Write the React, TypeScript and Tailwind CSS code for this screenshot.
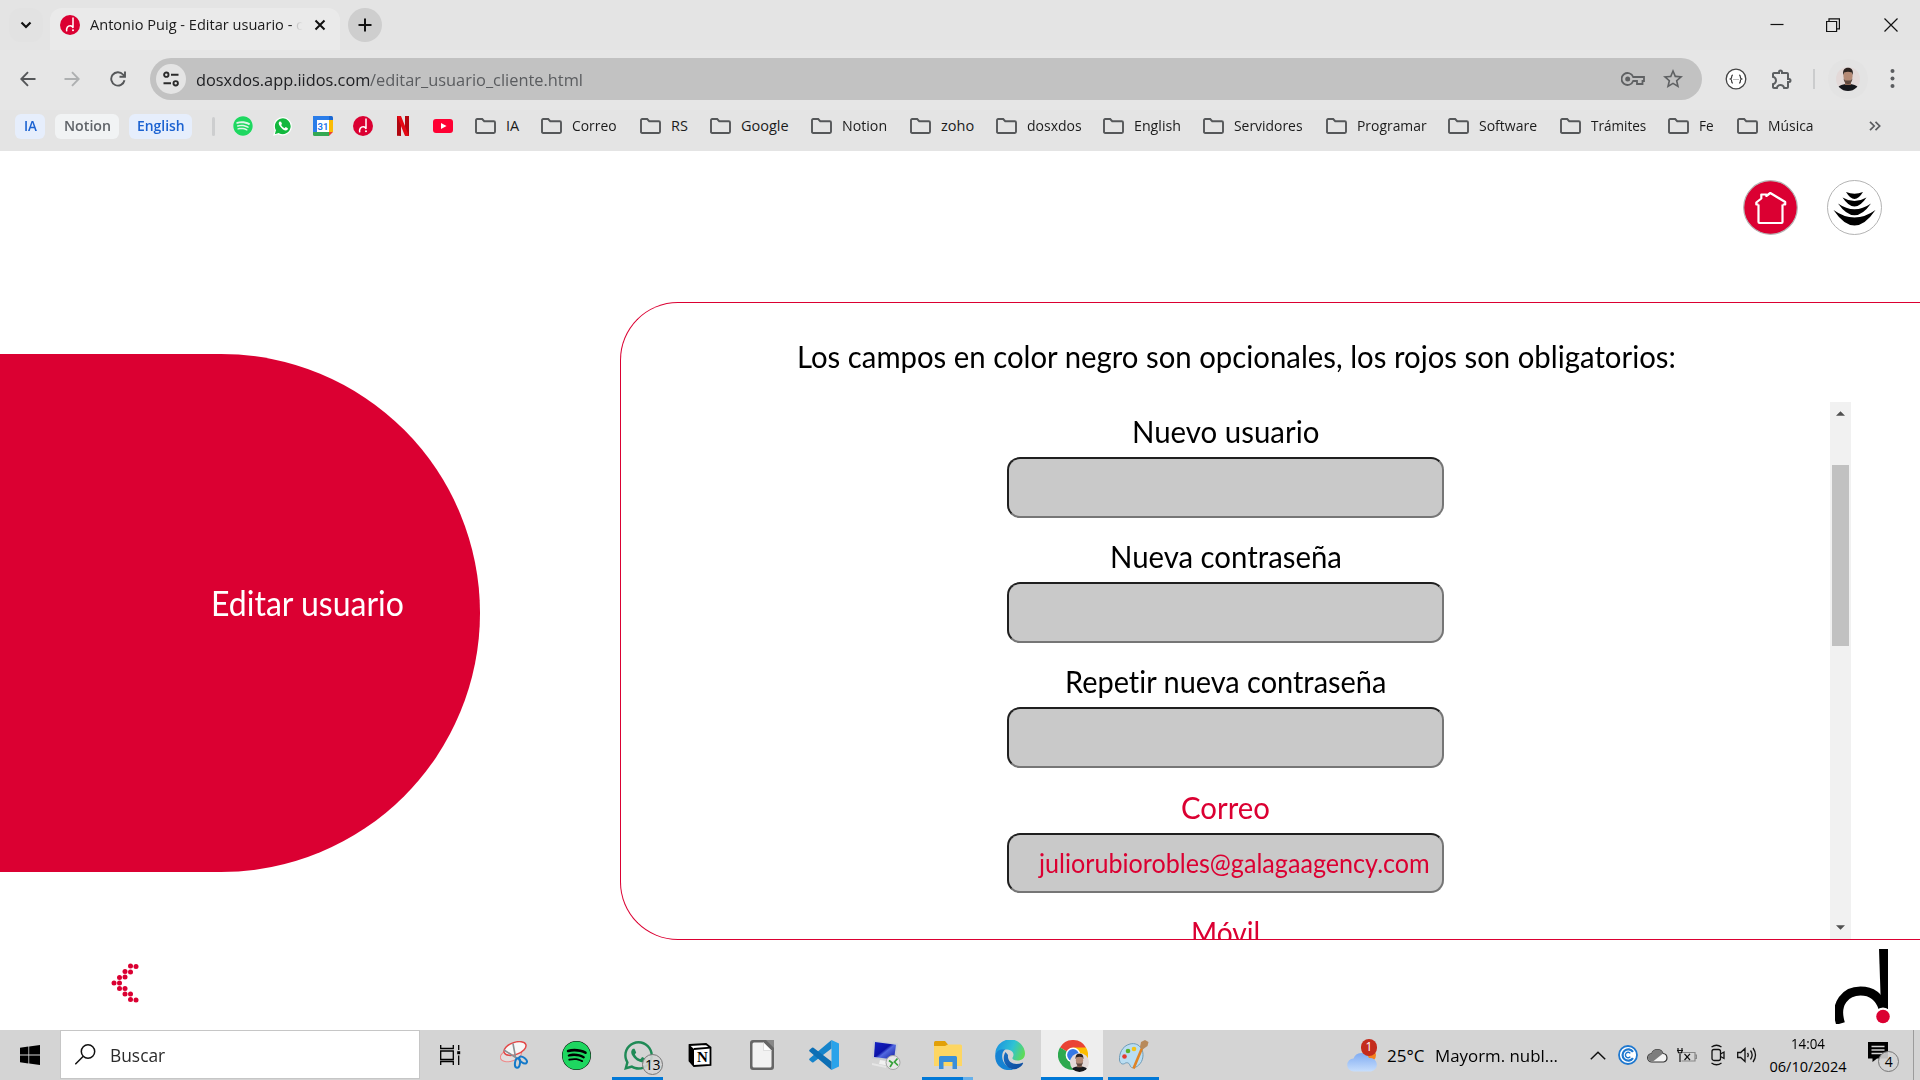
import React, { useLayoutEffect, useRef, useState } from "react";
import { FaSpotify, FaWhatsapp } from "react-icons/fa";
import { MdOutlineExtension, MdStarBorder } from "react-icons/md";

/* Condenses or expands a line of text so that it fills the given width. */
function Fit({ w, className = "", children }: { w: number; className?: string; children: React.ReactNode }) {
  const ref = useRef<HTMLSpanElement>(null);
  const [scale, setScale] = useState(1);
  useLayoutEffect(() => {
    if (ref.current) setScale(w / ref.current.offsetWidth);
  }, [w]);
  return (
    <span className={`block shrink-0 whitespace-nowrap ${className}`} style={{ width: w }}>
      <span ref={ref} className="inline-block origin-left" style={{ transform: `scaleX(${scale})` }}>
        {children}
      </span>
    </span>
  );
}

function DosLogo({ className = "" }: { className?: string }) {
  return (
    <svg viewBox="0 0 20 20" className={className}>
      <circle cx="10" cy="10" r="10" fill="#db0032" />
      <path d="M13 2.500V12.500M6.700 16.300c-.6-3.300 1-5.600 3.500-5.600 1.700 0 2.600 1 2.900 2.300" fill="none" stroke="#fff" strokeWidth="1.500" />
      <circle cx="13" cy="15.300" r="1" fill="#fff" />
    </svg>
  );
}

function Portrait({ className = "" }: { className?: string }) {
  return (
    <svg viewBox="0 0 24 24" className={className}>
      <defs>
        <clipPath id="face">
          <circle cx="12" cy="12" r="12" />
        </clipPath>
      </defs>
      <g clipPath="url(#face)">
        <rect width="24" height="24" fill="#e3d9d8" />
        <path d="M1 24c0-5 4-7 11-7s11 2 11 7z" fill="#15171c" />
        <rect x="9" y="12" width="6" height="6" fill="#8d6654" />
        <ellipse cx="12" cy="9" rx="4.600" ry="6.200" fill="#b58a75" />
        <path d="M7.200 8C6.500 3 8.500.8 12 .8S17.500 3 16.800 8l-1-2.600q-3.800-1.200-7.600 0z" fill="#2c221f" />
        <path d="M7.600 11.500c.4 4 2.400 5.500 4.400 5.500s4-1.500 4.400-5.500l-1.700 1.900h-5.400z" fill="#5f4a40" />
      </g>
    </svg>
  );
}

function Folder() {
  return (
    <svg viewBox="0 0 21 16" className="h-4 w-[21px] shrink-0" fill="none" stroke="#555759" strokeWidth="1.900">
      <path d="M1 2.200Q1 1 2.200 1h5l2 2.200h9.600Q20 3.200 20 4.400v9.400q0 1.200-1.200 1.200H2.200Q1 15 1 13.800z" />
    </svg>
  );
}

const bookmarks = [
  { label: "IA", cell: "w-[66px]", w: 13 },
  { label: "Correo", cell: "w-[99px]", w: 45 },
  { label: "RS", cell: "w-[70px]", w: 17 },
  { label: "Google", cell: "w-[101px]", w: 48 },
  { label: "Notion", cell: "w-[99px]", w: 45 },
  { label: "zoho", cell: "w-[86px]", w: 33 },
  { label: "dosxdos", cell: "w-[107px]", w: 55 },
  { label: "English", cell: "w-[100px]", w: 47 },
  { label: "Servidores", cell: "w-[123px]", w: 69 },
  { label: "Programar", cell: "w-[122px]", w: 70 },
  { label: "Software", cell: "w-[112px]", w: 58 },
  { label: "Trámites", cell: "w-[108px]", w: 55 },
  { label: "Fe", cell: "w-[69px]", w: 15 },
  { label: "Música", cell: "w-[131px]", w: 46 },
];

function TabStrip() {
  return (
    <div className="flex h-[50px] items-start pl-[9px] pt-2">
      <div className="flex size-[34px] items-center justify-center rounded-xl bg-[#e2e2e2]">
        <svg viewBox="0 0 12 8" className="h-2 w-3" fill="none" stroke="#111" strokeWidth="2.200">
          <path d="M1.500 1.500 6 6l4.500-4.500" />
        </svg>
      </div>
      <div className="ml-[7px] flex h-[42px] w-[290px] items-start rounded-t-xl bg-[#eaeaea] pl-[10px]">
        <DosLogo className="mt-[7px] size-5" />
        <div className="ml-[10px] mt-[5px] flex h-6 w-[216px] items-center text-[14.5px] text-[#1b1b1b]">
          <Fit w={202}>Antonio Puig - Editar usuario -</Fit>
          <span className="ml-[4px] bg-gradient-to-r from-[#c0c0c0] to-[#eaeaea] bg-clip-text text-transparent">c</span>
        </div>
        <svg viewBox="0 0 12 12" className="ml-[8px] mt-[11px] size-3" stroke="#111" strokeWidth="2">
          <path d="m1.500 1.500 9 9m0-9-9 9" />
        </svg>
      </div>
      <div className="ml-2 flex size-[34px] items-center justify-center rounded-full bg-[#cecece]">
        <svg viewBox="0 0 14 14" className="size-[14px]" stroke="#111" strokeWidth="2">
          <path d="M7 .5v13M.5 7h13" />
        </svg>
      </div>
      <div className="ml-auto flex h-[34px] items-center">
        <svg viewBox="0 0 14 14" className="mr-[42px] size-[14px]" stroke="#111" strokeWidth="1.200">
          <path d="M.5 6.500h13" />
        </svg>
        <svg viewBox="0 0 14 14" className="mr-[44px] size-[14px]" fill="none" stroke="#111" strokeWidth="1.200">
          <path d="M.6 3.500h10v10H.6zM3 3.500V.8h10.400v10h-2.800" />
        </svg>
        <svg viewBox="0 0 14 14" className="mr-[22px] size-[14px]" stroke="#111" strokeWidth="1.200">
          <path d="m.5.5 13 13m0-13-13 13" />
        </svg>
      </div>
    </div>
  );
}

function Toolbar() {
  return (
    <div className="flex h-[60px] items-center bg-[#e6e6e6] pb-[2px]">
      <svg viewBox="0 0 16 16" className="ml-5 size-4" fill="none" stroke="#555759" strokeWidth="1.900">
        <path d="M15.500 8H1.500M8 1.200 1.300 8 8 14.800" />
      </svg>
      <svg viewBox="0 0 16 16" className="ml-[28px] size-4" fill="none" stroke="#aeb0b1" strokeWidth="1.900">
        <path d="M.5 8h14M8 1.200 14.700 8 8 14.800" />
      </svg>
      <svg viewBox="0 0 16 16" className="ml-[30px] size-4" fill="none" stroke="#555759" strokeWidth="1.900">
        <path d="M14.500 9.300A6.700 6.700 0 1 1 13 3.500l1.700 2M15 .5v5.300H9.500" />
      </svg>
      <div className="ml-[24px] flex h-[42px] w-[1552px] items-center rounded-full bg-[#c2c2c2] pl-[6px]">
        <div className="flex size-[30px] items-center justify-center rounded-full bg-[#e4e4e4]">
          <svg viewBox="0 0 16 16" className="size-4" fill="none" stroke="#2b2b2b" strokeWidth="1.900">
            <circle cx="3.300" cy="3.700" r="2.200" />
            <circle cx="12.700" cy="12.300" r="2.200" />
            <path d="M8 3.700h7.500M.5 12.300H8" />
          </svg>
        </div>
        <div className="ml-[10px] flex text-[17px] leading-none">
          <Fit w={174} className="text-[#202124]">dosxdos.app.iidos.com</Fit>
          <Fit w={213} className="text-[#5a5c5f]">/editar_usuario_cliente.html</Fit>
        </div>
        <svg viewBox="0 0 24 14" className="ml-auto h-[14px] w-6" fill="none" stroke="#5f6163" strokeWidth="1.800">
          <path d="M12.200 5A6 6 0 1 0 12.200 9H16v3h5.500V9H23V5z" />
          <circle cx="6.700" cy="7" r="1.600" fill="#5f6163" />
        </svg>
        <MdStarBorder className="ml-[16px] mr-[17px] size-6 text-[#5f6163]" />
      </div>
      <svg viewBox="0 0 22 22" className="ml-[23px] size-[22px]">
        <circle cx="11" cy="11" r="9.800" fill="#fff" stroke="#444" strokeWidth="1.300" />
        <path d="M8 7q-1.300 0-1.300 1.700T5.400 11q1.300.4 1.300 2.300T8 15M14 7q1.300 0 1.300 1.700T16.600 11q-1.300.4-1.300 2.300T14 15" fill="none" stroke="#333" strokeWidth="1.200" />
        <path d="M8.500 11.500h1m1 0h1m1 0h1" stroke="#777" />
      </svg>
      <MdOutlineExtension className="ml-[23px] size-6 text-[#5c5f61]" />
      <div className="ml-[19px] h-5 w-[2px] bg-[#cbcccd]" />
      <div className="ml-[13px] flex size-10 items-center justify-center rounded-full bg-[#e3e3e3]">
        <Portrait className="size-6" />
      </div>
      <svg viewBox="0 0 5 20" className="ml-[22px] h-5 w-[5px]" fill="#5a5c5f">
        <circle cx="2.500" cy="2" r="2" />
        <circle cx="2.500" cy="9.500" r="2" />
        <circle cx="2.500" cy="17" r="2" />
      </svg>
    </div>
  );
}

function BookmarkBar() {
  return (
    <div className="flex h-[41px] items-center pb-[9px] pl-[15px] text-[14.5px] text-[#1b1b1b]">
      <div className="flex h-[25px] w-[30px] items-center justify-center rounded-md bg-[#e6eefc]">
        <Fit w={13} className="font-semibold text-[#1b62d1]">IA</Fit>
      </div>
      <div className="ml-[10px] flex h-[25px] w-[64px] items-center justify-center rounded-md bg-[#f1f3f4]">
        <Fit w={47} className="font-semibold text-[#5f6368]">Notion</Fit>
      </div>
      <div className="ml-[10px] flex h-[25px] w-[63px] items-center justify-center rounded-md bg-[#e6eefc]">
        <Fit w={48} className="font-semibold text-[#1b62d1]">English</Fit>
      </div>
      <div className="ml-5 h-[19px] w-[3px] rounded bg-[#cdcecf]" />
      <div className="ml-[18px] rounded-full bg-[#e0f5e7]">
        <FaSpotify className="size-5 text-[#1ed760]" />
      </div>
      <svg viewBox="0 0 20 20" className="ml-5 size-5">
        <path d="M1 19l1.300-4.700A8.500 8.500 0 1 1 5.700 17.700z" fill="#12b83e" stroke="#fff" strokeWidth="1.200" />
        <path d="M6.500 5.500q-1.800 1.600.5 4.700 3 4.200 6 4.200 2.200-.4 1.900-2.200l-2.200-1.100-1.100 1.200q-2.300-.9-3.500-3.200l.9-1.200-.9-2.200z" fill="#fff" />
      </svg>
      <svg viewBox="0 0 20 20" className="ml-5 size-5">
        <path d="M0 0h16v16H0z" fill="#2a7de9" />
        <path d="M16 0h2.500Q20 0 20 1.500V4h-4z" fill="#1967d2" />
        <path d="M16 4h4v12h-4z" fill="#fbbc04" />
        <path d="M0 16h16v4H1.500Q0 20 0 18.500z" fill="#34a853" />
        <path d="M16 16h4l-4 4z" fill="#ea4335" />
        <path d="M4 4h12v12H4z" fill="#fff" />
        <text x="10" y="13.500" textAnchor="middle" fontSize="9.500" fontWeight="600" fontFamily="Roboto, sans-serif" fill="#1a73e8">31</text>
      </svg>
      <DosLogo className="ml-5 size-5" />
      <svg viewBox="0 0 12 20" className="ml-6 h-5 w-3">
        <path d="M0 0h4v20l-4-.3zM8 0h4v20l-4-.3z" fill="#b1060f" />
        <path d="M0 0h4l8 20-4.200-.5z" fill="#e50914" />
      </svg>
      <svg viewBox="0 0 20 14" className="ml-6 h-[14px] w-5">
        <rect width="20" height="14" rx="3" fill="#f03" />
        <path d="m8 4 5.500 3L8 10z" fill="#fff" />
      </svg>
      <div className="ml-[22px] flex">
        {bookmarks.map((b) => (
          <div key={b.label} className={`flex shrink-0 items-center ${b.cell}`}>
            <Folder />
            <Fit w={b.w} className="ml-[10px]">{b.label}</Fit>
          </div>
        ))}
      </div>
      <svg viewBox="0 0 12 10" className="ml-[1px] h-[10px] w-3" fill="none" stroke="#5a5c5f" strokeWidth="1.700">
        <path d="m1 .8 4.200 4.200L1 9.200M6.500.8l4.200 4.200-4.200 4.200" />
      </svg>
    </div>
  );
}

const fields = [
  { label: "Nuevo usuario", w: 187, red: false, value: "" },
  { label: "Nueva contraseña", w: 232, red: false, value: "" },
  { label: "Repetir nueva contraseña", w: 321, red: false, value: "" },
  { label: "Correo", w: 89, red: true, value: "juliorubiorobles@galagaagency.com" },
  { label: "Móvil", w: 69, red: true, value: "" },
];

const backArrowDots = [
  [19.5, 3], [25, 3.5], [14, 8.5], [19.5, 9], [8.5, 14.5], [14, 14], [3, 20],
  [8.5, 20], [8.5, 25.5], [14, 25.5], [14, 31], [19.5, 31], [19.5, 36.5], [25, 37],
];

function Page() {
  return (
    <main className="flex h-[879px] overflow-hidden bg-white font-['Lato',sans-serif] [font-variant-ligatures:none]">
      <div className="w-[620px] shrink-0 pt-[203px]">
        <div className="flex h-[518px] w-[480px] items-center justify-end rounded-r-full bg-[#db0032] pr-[76px]">
          <Fit w={193} className="mb-5 text-[34px] leading-[40px] text-white">Editar usuario</Fit>
        </div>
        <svg viewBox="0 0 28 40" className="ml-[111px] mt-[91px] h-10 w-7" fill="#db0032">
          {backArrowDots.map(([x, y]) => (
            <circle key={`${x}-${y}`} cx={x} cy={y} r="2.500" />
          ))}
        </svg>
      </div>
      <div className="flex grow flex-col">
        <div className="flex h-[151px] justify-end gap-[29px] pr-[38px] pt-[29px]">
          <svg viewBox="0 0 55 55" className="size-[55px]">
            <circle cx="27.500" cy="27.500" r="26.800" fill="#db0032" stroke="#b5b5b5" strokeWidth="1.200" />
            <path d="M15.500 24.500V42q0 1 1 1h22q1 0 1-1V24.500M15.500 24.500h-2.200v-2l5-4v-4h5v1.500l4-3L42.200 22v2.500h-2.500" fill="none" stroke="#fff" strokeWidth="2.200" strokeLinejoin="round" />
          </svg>
          <svg viewBox="0 0 55 55" className="size-[55px]">
            <circle cx="27.500" cy="27.500" r="27" fill="#fff" stroke="#aaa" strokeWidth=".9" />
            <path d="M19 12q8.500 3.500 17 0-8.500 14-17 0zM15.500 17.500q12 7 24 0-12 18-24 0zM11 23.500q16.500 11.500 33 0-16.500 23.500-33 0zM6.500 30q21 15 42 0-21 31-42 0z" fill="#000" />
          </svg>
        </div>
        <section className="flex h-[638px] flex-col overflow-hidden rounded-l-[58px] border border-r-0 border-[#db0032]">
          <div className="flex h-[99px] shrink-0 pl-[176px] pt-[33px]">
            <Fit w={879} className="text-[31px] leading-[40px]">
              Los campos en color negro son opcionales, los rojos son obligatorios:
            </Fit>
          </div>
          <div className="flex min-h-0 grow">
            <div className="flex w-[1209px] flex-col items-center overflow-hidden">
              {fields.map((f) => (
                <div key={f.label} className="flex h-[125.2px] w-[437px] shrink-0 flex-col items-center pt-[9px]">
                  <Fit w={f.w} className={f.red ? "text-[31px] leading-[40px] text-[#db0032]" : "text-[31px] leading-[40px] text-black"}>
                    {f.label}
                  </Fit>
                  <div className="mt-[6px] flex h-[60.5px] w-[437px] shrink-0 items-center rounded-[13px] border-2 border-b-[#767676] border-l-[#1f1f1f] border-r-[#767676] border-t-[#1f1f1f] bg-[#c9c9c9] pl-[30px]">
                    {f.value && <Fit w={391} className="text-[27px] leading-[40px] text-[#db0032]">{f.value}</Fit>}
                  </div>
                </div>
              ))}
            </div>
            <div className="flex w-[21px] flex-col items-center bg-[#f1f1f1]">
              <svg viewBox="0 0 10 5" className="mt-[9px] h-[5px] w-[9px]" fill="#505050">
                <path d="M0 5 5 0l5 5z" />
              </svg>
              <div className="mt-[49px] h-[181px] w-[17px] bg-[#c1c1c1]" />
              <svg viewBox="0 0 10 5" className="mb-[9px] mt-auto h-[5px] w-[9px]" fill="#505050">
                <path d="m0 0 5 5 5-5z" />
              </svg>
            </div>
          </div>
        </section>
        <svg viewBox="0 0 56 76" className="ml-auto mr-[29px] mt-[8px] h-[76px] w-[56px]">
          <path d="M44 1h9v60h-7z" fill="#000" />
          <path d="M5.500 75.500C-1 55 11 43 25.500 43 37 43 44.500 49.500 48 60" fill="none" stroke="#000" strokeWidth="9" />
          <circle cx="48" cy="68.500" r="9" fill="#fff" />
          <circle cx="48" cy="68.500" r="6.800" fill="#db0032" />
        </svg>
      </div>
    </main>
  );
}

function CountBadge({ children, className = "" }: { children: React.ReactNode; className?: string }) {
  return (
    <span className={`absolute flex size-[21px] items-center justify-center rounded-full border border-[#777] bg-[#d4d4d4]/90 text-[14px] font-medium tracking-[-0.5px] text-black ${className}`}>
      {children}
    </span>
  );
}

function TaskCell({ children, bar = "", active = false }: { children: React.ReactNode; bar?: string; active?: boolean }) {
  return (
    <div className={`relative flex h-[50px] w-[62px] shrink-0 items-center justify-center ${active ? "bg-[#eeeeee]" : ""}`}>
      {children}
      {bar && <span className={`absolute bottom-0 h-[3px] bg-[#0078d7] ${bar}`} />}
    </div>
  );
}

function Taskbar() {
  return (
    <footer className="flex h-[50px] items-center bg-[#d4d4d4]">
      <svg viewBox="0 0 20 20" className="ml-5 size-5 shrink-0" fill="#000">
        <path d="M0 2.800 8.400 1.500v8H0zM9.200 1.400 20 0v9.500H9.200zM0 10.400h8.400v8.100L0 17.200zM9.200 10.400H20V20L9.200 18.600z" />
      </svg>
      <div className="ml-5 flex h-[49px] w-[360px] shrink-0 items-center self-start border border-[#c6c6c6] bg-white pl-[14px]">
        <svg viewBox="0 0 21 21" className="h-[21px] w-[21px]" fill="none" stroke="#111" strokeWidth="1.500">
          <circle cx="13" cy="7.500" r="6.700" />
          <path d="m8.300 12.300-8 8" />
        </svg>
        <Fit w={55} className="ml-[14px] mt-[2px] text-[18px] text-[#2b2b2b]">Buscar</Fit>
      </div>
      <svg viewBox="0 0 21 20" className="ml-[20px] h-5 w-[21px] shrink-0" fill="none" stroke="#000" strokeWidth="1.300">
        <path d="M.7 0v3.500h12.600V0M.7 6h12.600v8.500H.7zM.7 20v-3.500h12.600V20M18.700 0v5M18.700 10.500V20" />
        <path d="M17.200 6.200h3v3h-3z" fill="#000" stroke="none" />
      </svg>
      <div className="ml-[22px] flex">
        <TaskCell>
          <svg viewBox="0 0 28 28" className="size-7" fill="none">
            <ellipse cx="11" cy="14" rx="11" ry="6" transform="rotate(-18 11 14)" fill="#e3dede" stroke="#e88" />
            <ellipse cx="15" cy="7.500" rx="11.500" ry="6" transform="rotate(-20 15 7.500)" fill="#f7f7f7" stroke="#e34848" strokeWidth="1.500" />
            <path d="M13 2.500 15.500 16M4 9l14 9" stroke="#8b8f94" strokeWidth="1.600" />
            <ellipse cx="17.500" cy="22" rx="2.500" ry="4.800" transform="rotate(8 17.500 22)" stroke="#1479c9" strokeWidth="2" />
            <ellipse cx="23" cy="19" rx="2.500" ry="4.500" transform="rotate(-52 23 19)" stroke="#1479c9" strokeWidth="2" />
          </svg>
        </TaskCell>
        <TaskCell>
          <span className="rounded-full bg-black">
            <FaSpotify className="size-[29px] text-[#1ed760]" />
          </span>
        </TaskCell>
        <TaskCell bar="left-[5px] w-[51px]">
          <FaWhatsapp className="size-[33px] text-[#1f8a56]" />
          <CountBadge className="left-[35px] top-[24px]">13</CountBadge>
        </TaskCell>
        <TaskCell>
          <svg viewBox="0 0 24 24" className="size-6">
            <path d="M1.500 2 18 1l4.500 3.500V22L6 23l-4.500-5z" fill="#fff" stroke="#000" strokeWidth="1.800" />
            <path d="M1.500 2 6 6v17l-4.500-5z" fill="#000" />
            <path d="M6 6l16.500-1.300" stroke="#000" strokeWidth="1.800" />
            <text x="14.300" y="19" textAnchor="middle" fontSize="15" fontWeight="700" fontFamily="Liberation Serif, serif">N</text>
          </svg>
        </TaskCell>
        <TaskCell>
          <svg viewBox="0 0 24 30" className="h-[30px] w-6">
            <rect width="24" height="30" rx="3" fill="#666" />
            <path d="M16 0h8v8z" fill="#888" />
            <path d="M2.500 4q0-1.500 1.500-1.500h9.500l8 8V26q0 1.500-1.500 1.500H4q-1.500 0-1.500-1.500z" fill="#f2f2f2" />
            <path d="M13.500 2.500v8h8z" fill="#fff" stroke="#ccc" strokeWidth=".6" />
          </svg>
        </TaskCell>
        <TaskCell>
          <svg viewBox="0 0 30 30" className="size-[30px]">
            <path d="M22.500 0 30 3.500v23L22.500 30z" fill="#2aa3ea" />
            <path d="M22.500 0v8.500L4.500 22.200q-.8.600-1.500 0L.6 20.200q-.9-.8 0-1.600z" fill="#1684cb" />
            <path d="M22.500 30v-8.500L4.500 7.800q-.8-.6-1.500 0L.6 9.800q-.9.800 0 1.600z" fill="#0d6fb5" />
          </svg>
        </TaskCell>
        <TaskCell>
          <svg viewBox="0 0 30 30" className="size-[30px]">
            <defs>
              <linearGradient id="monitor" x1="0" y1="0" x2="1" y2="1">
                <stop offset="0" stopColor="#1422c4" />
                <stop offset=".45" stopColor="#0b12a8" />
                <stop offset=".55" stopColor="#5168e0" />
                <stop offset="1" stopColor="#0d1699" />
              </linearGradient>
            </defs>
            <path d="m9 20 8 1.500v4l-9-1.500z" fill="#f1f1f1" />
            <path d="m1 23 14 3v2L1 25z" fill="#e6e6e6" />
            <path d="m2 .5 25 3L24.500 21 1 18.500z" fill="#c8ced6" />
            <path d="m4 2 21 2.800-2 14.700L3 17z" fill="url(#monitor)" />
            <circle cx="22" cy="22.500" r="7" fill="#e8e8e8" stroke="#a5a5a5" />
            <path d="m18 20.500 3.500 2.500-2.500 4M26.500 18.500 23.500 22l3.500 3.500" fill="none" stroke="#37a13a" strokeWidth="1.700" />
          </svg>
        </TaskCell>
        <TaskCell bar="left-[5px] w-[41px]">
          <svg viewBox="0 0 28 28" className="size-7">
            <path d="M0 1.500Q0 0 1.500 0H11l3 3.500-3 3H0z" fill="#e2a007" />
            <path d="M0 5h11l3-1.500h12.500Q28 3.500 28 5v20H0z" fill="#fdd663" />
            <path d="M5 28V16.500Q5 15 6.500 15h15q1.500 0 1.500 1.500V28h-4.500v-7h-9v7z" fill="#3a8fd9" />
          </svg>
          <span className="absolute bottom-0 left-[46px] h-[3px] w-[10px] bg-[#66b0ea]" />
        </TaskCell>
        <TaskCell>
          <svg viewBox="0 0 30 30" className="size-[30px]">
            <defs>
              <linearGradient id="edgeTop" x1="0" y1=".3" x2="1" y2=".6">
                <stop offset="0" stopColor="#1c93df" />
                <stop offset=".55" stopColor="#2fc2d4" />
                <stop offset="1" stopColor="#5fdb55" />
              </linearGradient>
              <linearGradient id="edgeLow" x1="0" y1="0" x2="1" y2="1">
                <stop offset="0" stopColor="#1b6fc2" />
                <stop offset="1" stopColor="#0c4a9c" />
              </linearGradient>
            </defs>
            <path d="M.3 15A14.800 14.800 0 0 1 30 13.500c0 4.500-3.200 7-7.500 7-4 0-5.500-1.500-5-2.700 2-2.500 1.500-7.800-5.500-8.300C6 9.500 1 11.500.3 15z" fill="url(#edgeTop)" />
            <path d="M.2 15.500C.5 10.500 6 8.800 10.500 9.200c-5 3-4.500 13.300 2.500 17.300 1.500 1.500 4 3 6 3C8 32.500-.2 25 .2 15.500z" fill="#1683d3" />
            <path d="M10.500 12c-4.500 7 0 17.500 9 17.300 4-.5 7.500-3.300 8.500-5.800.4-.8-.3-1-1-.6-7 3-15 .1-14-7.900z" fill="url(#edgeLow)" />
          </svg>
        </TaskCell>
        <TaskCell bar="inset-x-0" active>
          <svg viewBox="0 0 30 30" className="ml-[2px] size-[30px]">
            <path d="M15 15 2 7.500A15 15 0 0 1 28 7.500z" fill="#ea4335" />
            <path d="M15 15 2 7.500A15 15 0 0 0 15 30l6.500-11.200z" fill="#2da94f" />
            <path d="M15 7.500h13A15 15 0 0 1 15 30l6.500-11.200z" fill="#fdbd00" />
            <circle cx="15" cy="15" r="7.400" fill="#fff" />
            <circle cx="15" cy="15" r="5.900" fill="#3578e5" />
          </svg>
          <Portrait className="absolute left-[29px] top-[23px] size-[19px]" />
        </TaskCell>
        <TaskCell bar="left-[5px] w-[51px]">
          <svg viewBox="0 0 30 30" className="size-[30px]">
            <path d="M11 4C3 6 0 14 .5 20c.5 4 3.500 5 6 3 3-1 4 1 5 3.500 2 3 8 .5 11-5C27 12 21 1.500 11 4z" fill="#b9ddf2" stroke="#6e9cb8" />
            <circle cx="5.500" cy="16.500" r="2.300" fill="#e33b32" />
            <circle cx="9" cy="11" r="2.300" fill="#5bb32d" />
            <circle cx="15" cy="9" r="2.300" fill="#f2c318" />
            <path d="M23.500 7 14.500 28.500" stroke="#e08324" strokeWidth="2.600" />
            <path d="m21 7 1-5 4-2 3.500 2-1 4-5 3.500z" fill="#b88a5b" />
          </svg>
        </TaskCell>
      </div>
      <div className="ml-auto flex h-full items-center">
        <div className="relative mb-[3px] mr-[10px] h-[36px] w-[30px]">
          <svg viewBox="0 0 30 24" className="absolute bottom-0 left-0 h-6 w-[30px]">
            <defs>
              <linearGradient id="cloud" x1="0" y1="0" x2="0" y2="1">
                <stop offset="0" stopColor="#7fabf2" />
                <stop offset="1" stopColor="#c7defc" />
              </linearGradient>
            </defs>
            <circle cx="22" cy="7" r="7" fill="#f5821f" />
            <path d="M7 23.500a6.500 6.500 0 0 1-.5-13A8.300 8.300 0 0 1 22 10a6.800 6.800 0 0 1 2 13.500z" fill="url(#cloud)" />
          </svg>
          <span className="absolute right-0 top-[3px] flex h-[17px] w-4 items-center justify-center rounded-full bg-[#c42b1c] text-[12px] text-white">1</span>
        </div>
        <Fit w={37} className="mt-[1px] text-[17px]">25°C</Fit>
        <Fit w={123} className="ml-[11px] mt-[1px] text-[17px]">Mayorm. nubl...</Fit>
        <svg viewBox="0 0 16 9" className="ml-[32px] h-[9px] w-4" fill="none" stroke="#111" strokeWidth="1.500">
          <path d="m.8 8.200 7.200-7 7.200 7" />
        </svg>
        <svg viewBox="0 0 20 20" className="ml-[12px] size-5" fill="none">
          <circle cx="10" cy="10" r="9" fill="#fff" stroke="#1f78cf" strokeWidth="1.800" />
          <path d="M15 6.800a5.700 5.700 0 1 0 0 6.400" stroke="#1f78cf" strokeWidth="2.200" />
          <path d="M12.300 8.400a2.700 2.700 0 1 0 0 3.200" stroke="#1f78cf" strokeWidth="1.400" />
        </svg>
        <svg viewBox="0 0 21 15" className="ml-[9px] h-[15px] w-[21px]">
          <path d="M5 14a4.200 4.200 0 0 1-.3-8.400A6 6 0 0 1 16 5.500 4.300 4.300 0 0 1 16.500 14z" fill="#f4f4f4" stroke="#333" strokeWidth="1.200" />
          <path d="M1 9.500a4.200 4.200 0 0 1 3.700-3.900A6 6 0 0 1 16 5.500L6 13.500H4.500Q1 13 1 9.500z" fill="#7d7d7d" />
        </svg>
        <svg viewBox="0 0 20 16" className="ml-[9px] h-4 w-5" fill="none" stroke="#111" strokeWidth="1.200">
          <path d="M5 5.500h13v8.500H4.500M18 8h1.500v3.500H18" stroke="#888" />
          <path d="M7.500 6.800 13 13m0-6.200L7.500 13M3 15V7M1 1v3q0 2 2 2t2-2V1M0 3.500h6" />
        </svg>
        <svg viewBox="0 0 16 22" className="ml-[13px] h-[22px] w-4" fill="none" stroke="#111" strokeWidth="1.300">
          <rect x="2" y="5.500" width="8.500" height="11" rx="2" />
          <path d="m10.500 10 3.500-2v6.500l-3.500-2M1.500 3q5-3.500 10 0M1.500 19q5 3.500 10 0" />
        </svg>
        <svg viewBox="0 0 20 18" className="ml-[11px] h-[18px] w-5" fill="none" stroke="#111" strokeWidth="1.300">
          <path d="M.7 6.500h3l4.300-4v13l-4.300-4h-3zM10.500 7q1.500 2 0 4M13.500 4.500q3.300 4.500 0 9M16 2q5 7 0 14" />
        </svg>
        <div className="ml-[12px] flex w-[78px] flex-col items-center text-[14.5px] leading-[23px]">
          <Fit w={34}>14:04</Fit>
          <Fit w={77}>06/10/2024</Fit>
        </div>
        <div className="relative ml-[21px] mt-[4px] h-[30px] w-[31px]">
          <svg viewBox="0 0 20 20" className="size-5">
            <path d="M0 0h20v16.500H9L4.500 20v-3.500H0z" fill="#000" />
            <path d="M3.500 4.500h13M3.500 8h13M3.500 11.500h13" stroke="#d4d4d4" strokeWidth="1.400" />
          </svg>
          <CountBadge className="left-[10px] top-[9px]">4</CountBadge>
        </div>
        <div className="ml-[14px] h-full w-[7px] border-l border-[#9c9c9c]" />
      </div>
    </footer>
  );
}

export default function App() {
  return (
    <div className="flex h-[1080px] w-[1920px] flex-col overflow-hidden bg-white font-['Open_Sans',sans-serif] text-black">
      <header className="h-[151px] shrink-0 bg-[#e4e4e4]">
        <TabStrip />
        <Toolbar />
        <BookmarkBar />
      </header>
      <Page />
      <Taskbar />
    </div>
  );
}
